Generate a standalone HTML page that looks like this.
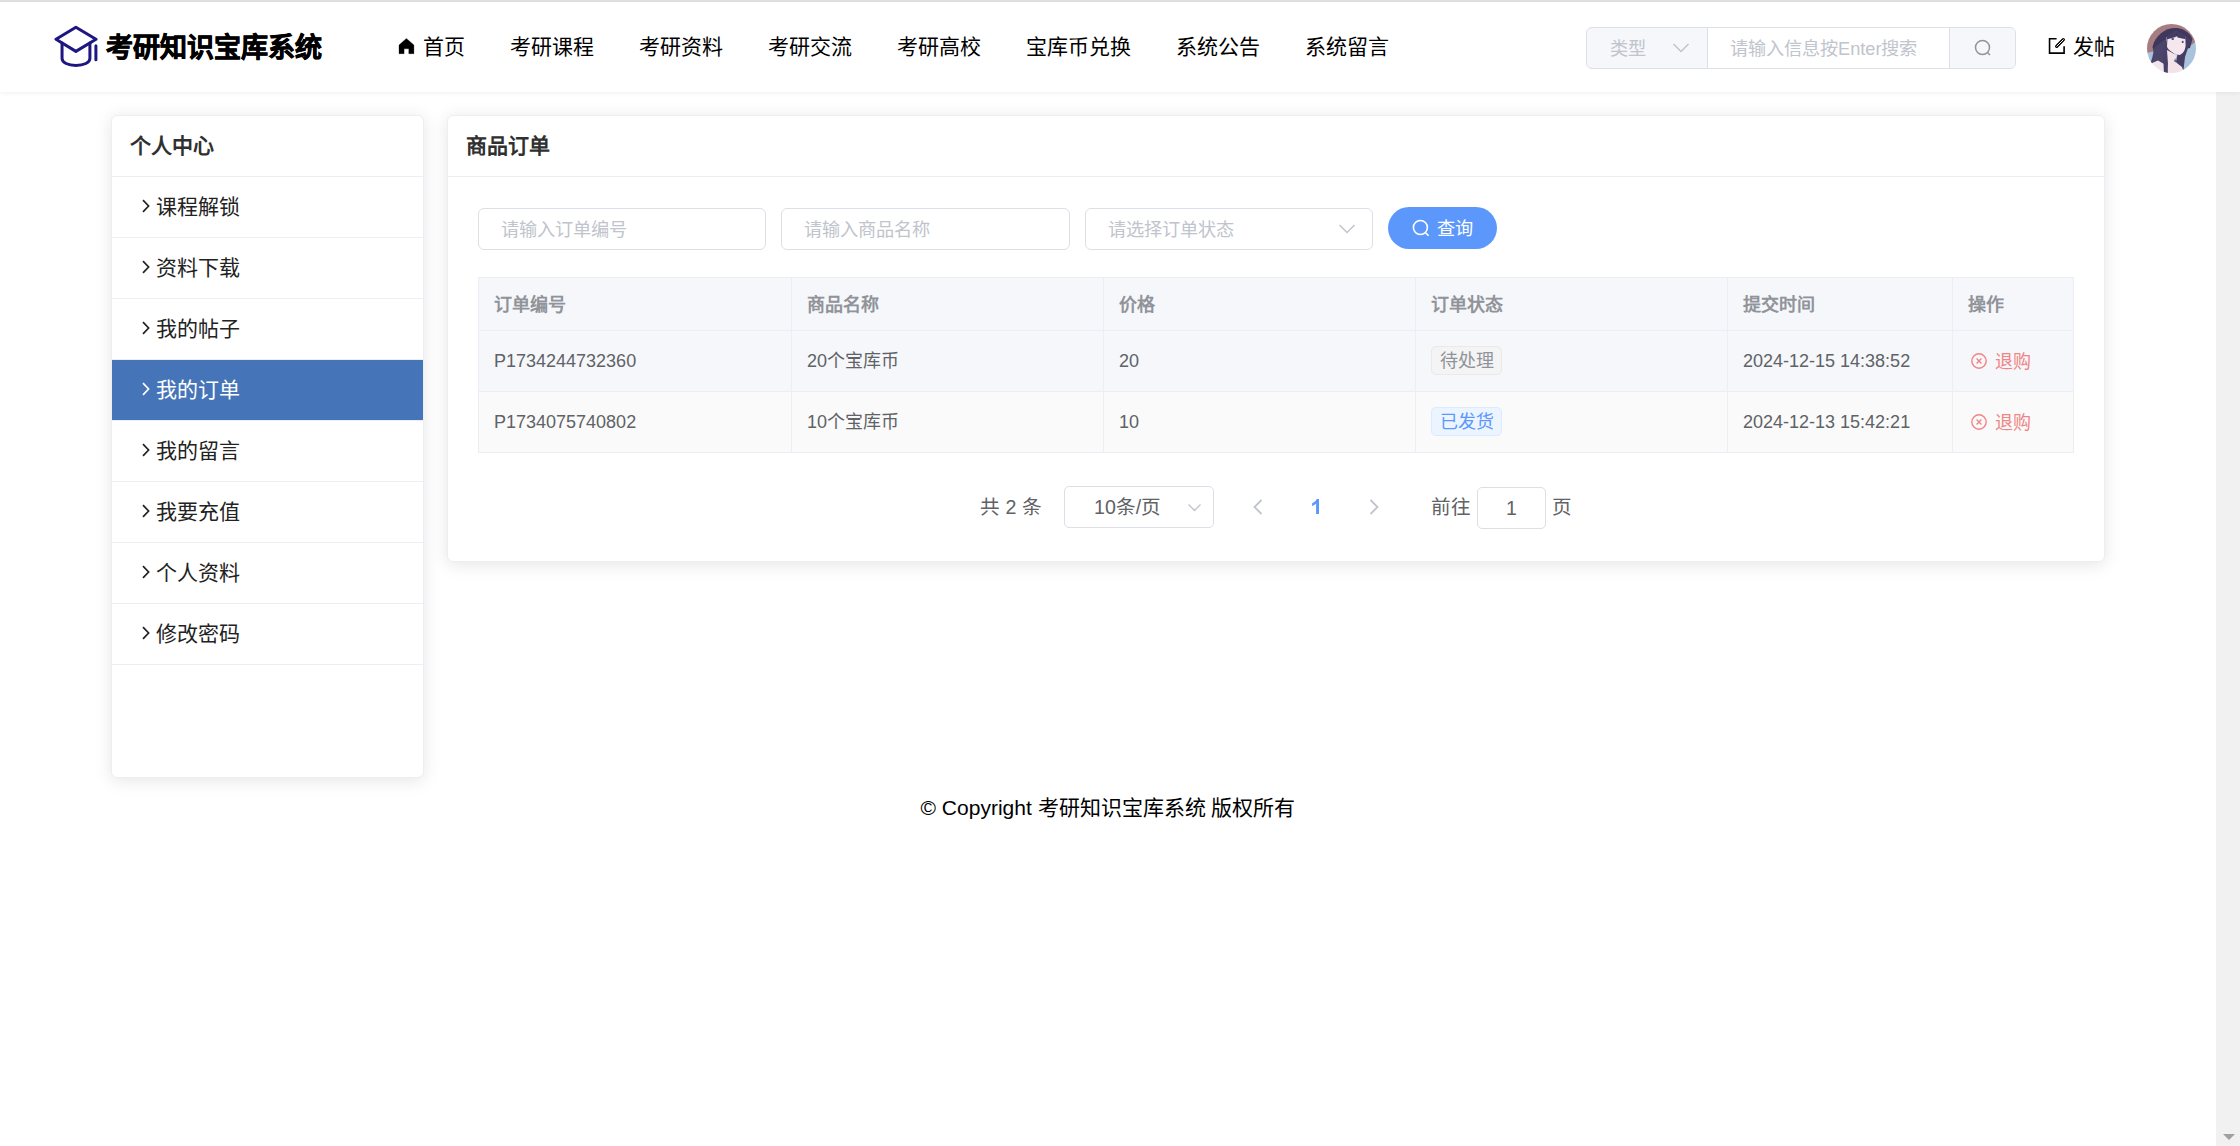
<!DOCTYPE html>
<html lang="zh-CN">
<head>
<meta charset="utf-8">
<title>考研知识宝库系统</title>
<style>
*{box-sizing:border-box;margin:0;padding:0}
html,body{width:2240px;height:1146px;overflow:hidden;background:#fff;font-family:"Liberation Sans",sans-serif;color:#000}
body{position:relative}
.abs{position:absolute}
/* top strip */
#strip{left:0;top:0;width:2240px;height:2px;background:#e1e3e0}
/* header */
#header{left:0;top:2px;width:2240px;height:90px;background:#fff;box-shadow:0 1.4px 5.6px rgba(0,21,41,.08);z-index:5}
#logo{left:54px;top:20px;width:46px;height:46px}
#title{left:106px;top:15px;height:62px;line-height:62px;font-size:27px;font-weight:bold;color:#000;white-space:nowrap;-webkit-text-stroke:0.7px #000}
.nav{top:0;height:90px;line-height:90px;font-size:21px;color:#000;white-space:nowrap}
/* scrollbar */
#sbar{left:2216px;top:92px;width:24px;height:1054px;background:#f1f1f1}
#sbar i{position:absolute;left:6.5px;top:1042px;width:0;height:0;border-left:6px solid transparent;border-right:6px solid transparent;border-top:6.5px solid #a0a0a0}
/* search */
#search{left:1586px;top:25px;width:430px;height:42px;border:1px solid #dcdfe6;border-radius:6px;background:#f5f7fa}
#search .mid{left:120px;top:-1px;width:243px;height:42px;background:#fff;border:1px solid #dcdfe6}
.ph{color:#c0c4cc;white-space:nowrap}
/* cards */
.card{background:#fff;border:1px solid #ebeef5;border-radius:6px;box-shadow:0 2.8px 16.8px rgba(0,0,0,.1)}
#side{left:111px;top:115px;width:313px;height:663px;overflow:hidden}
#side h3{height:61px;line-height:60px;padding-left:18px;font-size:21px;font-weight:bold;color:#303030;border-bottom:1px solid #ebeef5}
#side .it{height:61px;line-height:60px;padding-left:28px;font-size:21px;color:#222;border-bottom:1px solid #ebeef5;white-space:nowrap;position:relative}
#side .it.on{background:#4575b8;color:#fff}
#side .it svg{position:absolute;left:30px;top:22px}
#side .it span{margin-left:16px}
#main{left:447px;top:115px;width:1658px;height:447px}
#main h3{height:61px;line-height:60px;padding-left:18px;font-size:21px;font-weight:bold;color:#303030;border-bottom:1px solid #ebeef5}
.inp{height:42px;border:1px solid #dcdfe6;border-radius:6px;background:#fff;font-size:18.2px;line-height:42px;padding-left:22px}
#btn{left:1388px;top:207px;width:109px;height:42px;border-radius:21px;background:#5c98fc;color:#fff;font-size:18.2px;line-height:42px;white-space:nowrap}
/* table */
#tbl{left:478px;top:277px;width:1596px;height:176px;border:1px solid #ebeef5;font-size:18px;color:#606266}
#tbl .row{position:absolute;left:0;width:1594px;border-bottom:1px solid #ebeef5}
#tbl .c{position:absolute;top:0;height:100%;border-right:1px solid #ebeef5;padding-left:15px;white-space:nowrap}
.tag{display:inline-block;position:relative;top:-1.5px;left:-0.3px;height:29px;line-height:29px;padding:0 7.8px;border-radius:5px;border:1px solid;font-size:18px;vertical-align:middle}
.act svg{vertical-align:middle;margin-left:2.3px;margin-top:-2px}.act span{color:#f18585;margin-left:7.2px;position:relative;top:1px}
/* pagination */
.pg{font-size:19.6px;color:#606266;white-space:nowrap;line-height:42px;height:42px}
#foot{left:0;top:790.5px;width:2216px;text-align:center;font-size:21px;line-height:34px;color:#000;white-space:nowrap}
</style>
</head>
<body>
<div id="strip" class="abs"></div>
<div id="sbar" class="abs"><i></i></div>

<div id="header" class="abs">
  <svg id="logo" class="abs" viewBox="0 0 46 46" fill="none" stroke="#1f1781" stroke-width="3" stroke-linejoin="round" stroke-linecap="round">
    <path d="M21.9 5.2 L2 17.3 L21.9 29.4 L42 17.3 Z"/>
    <path d="M8.05 21 V36.6 C8.05 40.6 14 43.4 21.9 43.4 C29.9 43.4 35.9 40.6 35.9 36.6 V21"/>
    <path d="M41.9 23.8 V37.7"/>
  </svg>
  <div id="title" class="abs">考研知识宝库系统</div>

  <svg class="abs" style="left:398px;top:35px" width="17" height="18" viewBox="0 0 17 18"><path d="M8.4 1.4 L15.9 8 V16.7 H10.8 V11.8 H6.1 V16.7 H1 V8 Z" fill="#000" stroke="#000" stroke-width="0.3" stroke-linejoin="round"/></svg>
  <div class="nav abs" style="left:423px">首页</div>
  <div class="nav abs" style="left:510px">考研课程</div>
  <div class="nav abs" style="left:639px">考研资料</div>
  <div class="nav abs" style="left:768px">考研交流</div>
  <div class="nav abs" style="left:897px">考研高校</div>
  <div class="nav abs" style="left:1026px">宝库币兑换</div>
  <div class="nav abs" style="left:1176px">系统公告</div>
  <div class="nav abs" style="left:1305px">系统留言</div>

  <div id="search" class="abs">
    <div class="abs ph" style="left:23px;top:0;line-height:42px;font-size:18.2px">类型</div>
    <svg class="abs" style="left:85px;top:14px" width="18" height="12" viewBox="0 0 18 12" fill="none" stroke="#c0c4cc" stroke-width="1.5"><path d="M1.5 2 L9 9.5 L16.5 2"/></svg>
    <div class="mid abs"><div class="abs ph" style="left:22px;top:0;line-height:42px;font-size:18.2px">请输入信息按Enter搜索</div></div>
    <svg class="abs" style="left:386px;top:10px" width="20" height="20" viewBox="0 0 20 20" fill="none" stroke="#909399" stroke-width="1.5"><circle cx="9.5" cy="9.5" r="7"/><path d="M14.5 14.5 L17 17"/></svg>
  </div>

  <svg class="abs" style="left:2048px;top:35px" width="19" height="18" viewBox="0 0 19 18" fill="none" stroke="#000" stroke-linecap="round"><path d="M8.6 1.8 H1.55 V16.1 H16.1 V9.2" stroke-width="1.6" stroke-linecap="butt" stroke-linejoin="miter"/><path d="M8.7 9.3 L15.3 2.7" stroke-width="3.3"/><path d="M8.7 9.3 L15.3 2.7" stroke-width="1" stroke="#fff"/></svg>
  <div class="nav abs" style="left:2073px">发帖</div>
  <svg class="abs" style="left:2146.5px;top:22px" width="49" height="49" viewBox="0 0 49 49">
    <defs><clipPath id="av"><circle cx="24.5" cy="24.5" r="24.5"/></clipPath><filter id="bl" x="-10%" y="-10%" width="120%" height="120%"><feGaussianBlur stdDeviation="0.45"/></filter></defs>
    <g clip-path="url(#av)"><g filter="url(#bl)">
      <rect width="49" height="49" fill="#a9c3dc"/>
      <path d="M-1 -1 H50 V17 L40 24 L14 26 L-1 29 Z" fill="#a67e82"/>
      <path d="M5.5 23 C8 11 19 3.5 29 4 C37 4.5 43 9 45.5 15 L43 24 L8 32 Z" fill="#3f395c"/>
      <path d="M7 24 C6 31 5 36 3 40 L9 38 L22 50 L33 50 L30 42 L27 30 L22 12 Z" fill="#4c446b"/>
      <path d="M37 11 L44 16 L41 24 L38 33 L36.5 46 L29 38 L31 28 Z" fill="#463e64"/>
      <path d="M19.5 13 L38.3 12 L38.6 22 C38 27 35 30.5 32.3 31 C27 30 21 26.5 19.8 22 Z" fill="#f5e7ed"/>
      <path d="M20 12 L29 6 L38.6 12 L38.6 15.2 L30.5 13.4 L29.8 8 L28.6 13 L19.6 15.6 Z" fill="#453e63"/>
      <path d="M20 26 L30 31.5 L27 37 L35 43 L37 50 L20 50 L21 40 Z" fill="#f3e3e9"/>
      <path d="M4 39.5 L11 36.5 L17 40 L22 50 L12 50 Z" fill="#f2e6ec"/>
      <path d="M20.5 14.5 L19.5 30 L21 50 L17 50 L16 30 Z" fill="#4a4268"/>
      <ellipse cx="25.7" cy="15" rx="1.4" ry="1.1" fill="#4a4f9a"/><ellipse cx="35.7" cy="17.9" rx="1" ry="1.2" fill="#4a4f9a"/>
    </g></g>
  </svg>
</div>

<div id="side" class="abs card">
  <h3>个人中心</h3>
  <div class="it"><svg width="8" height="14" viewBox="0 0 8 14" fill="none" stroke="currentColor" stroke-width="1.7"><path d="M1 1.2 L6.6 7 L1 12.8"/></svg><span>课程解锁</span></div>
  <div class="it"><svg width="8" height="14" viewBox="0 0 8 14" fill="none" stroke="currentColor" stroke-width="1.7"><path d="M1 1.2 L6.6 7 L1 12.8"/></svg><span>资料下载</span></div>
  <div class="it"><svg width="8" height="14" viewBox="0 0 8 14" fill="none" stroke="currentColor" stroke-width="1.7"><path d="M1 1.2 L6.6 7 L1 12.8"/></svg><span>我的帖子</span></div>
  <div class="it on"><svg width="8" height="14" viewBox="0 0 8 14" fill="none" stroke="currentColor" stroke-width="1.7"><path d="M1 1.2 L6.6 7 L1 12.8"/></svg><span>我的订单</span></div>
  <div class="it"><svg width="8" height="14" viewBox="0 0 8 14" fill="none" stroke="currentColor" stroke-width="1.7"><path d="M1 1.2 L6.6 7 L1 12.8"/></svg><span>我的留言</span></div>
  <div class="it"><svg width="8" height="14" viewBox="0 0 8 14" fill="none" stroke="currentColor" stroke-width="1.7"><path d="M1 1.2 L6.6 7 L1 12.8"/></svg><span>我要充值</span></div>
  <div class="it"><svg width="8" height="14" viewBox="0 0 8 14" fill="none" stroke="currentColor" stroke-width="1.7"><path d="M1 1.2 L6.6 7 L1 12.8"/></svg><span>个人资料</span></div>
  <div class="it"><svg width="8" height="14" viewBox="0 0 8 14" fill="none" stroke="currentColor" stroke-width="1.7"><path d="M1 1.2 L6.6 7 L1 12.8"/></svg><span>修改密码</span></div>
</div>

<div id="main" class="abs card">
  <h3>商品订单</h3>
</div>

<div class="inp abs ph" style="left:478px;top:208px;width:288px">请输入订单编号</div>
<div class="inp abs ph" style="left:781px;top:208px;width:289px">请输入商品名称</div>
<div class="inp abs ph" style="left:1085px;top:208px;width:288px">请选择订单状态
  <svg class="abs" style="left:252px;top:14.3px" width="18" height="12" viewBox="0 0 18 12" fill="none" stroke="#c0c4cc" stroke-width="1.5"><path d="M1.5 2 L9 9.5 L16.5 2"/></svg>
</div>
<div id="btn" class="abs">
  <svg class="abs" style="left:23px;top:12px" width="20" height="20" viewBox="0 0 20 20" fill="none" stroke="#fff" stroke-width="1.6"><circle cx="9.4" cy="8.5" r="7"/><path d="M14.4 13.6 L17.6 16.8"/></svg>
  <span class="abs" style="left:49px;top:1px">查询</span>
</div>

<div id="tbl" class="abs">
  <div class="row" style="top:0;height:53px;background:#f5f7fa;color:#909399;font-weight:bold;line-height:54px">
    <div class="c" style="left:0;width:313px">订单编号</div>
    <div class="c" style="left:313px;width:312px">商品名称</div>
    <div class="c" style="left:625px;width:312px">价格</div>
    <div class="c" style="left:937px;width:312px">订单状态</div>
    <div class="c" style="left:1249px;width:225px">提交时间</div>
    <div class="c" style="left:1474px;width:120px;border-right:0">操作</div>
  </div>
  <div class="row" style="top:53px;height:61px;background:#f5f7fa;line-height:60px">
    <div class="c" style="left:0;width:313px">P1734244732360</div>
    <div class="c" style="left:313px;width:312px">20个宝库币</div>
    <div class="c" style="left:625px;width:312px">20</div>
    <div class="c" style="left:937px;width:312px"><span class="tag" style="background:#f4f4f5;border-color:#e9e9eb;color:#909399">待处理</span></div>
    <div class="c" style="left:1249px;width:225px">2024-12-15 14:38:52</div>
    <div class="c act" style="left:1474px;width:120px;border-right:0"><svg width="18" height="18" viewBox="0 0 18 18" fill="none" stroke="#f18585" stroke-width="1.4"><circle cx="9" cy="9" r="7.2"/><path d="M6.6 6.6 L11.4 11.4 M11.4 6.6 L6.6 11.4"/></svg><span>退购</span></div>
  </div>
  <div class="row" style="top:114px;height:60px;background:#fafafa;line-height:60px;border-bottom:0">
    <div class="c" style="left:0;width:313px">P1734075740802</div>
    <div class="c" style="left:313px;width:312px">10个宝库币</div>
    <div class="c" style="left:625px;width:312px">10</div>
    <div class="c" style="left:937px;width:312px"><span class="tag" style="background:#ecf5ff;border-color:#d9ecff;color:#5c98fc">已发货</span></div>
    <div class="c" style="left:1249px;width:225px">2024-12-13 15:42:21</div>
    <div class="c act" style="left:1474px;width:120px;border-right:0"><svg width="18" height="18" viewBox="0 0 18 18" fill="none" stroke="#f18585" stroke-width="1.4"><circle cx="9" cy="9" r="7.2"/><path d="M6.6 6.6 L11.4 11.4 M11.4 6.6 L6.6 11.4"/></svg><span>退购</span></div>
  </div>
</div>

<div class="pg abs" style="left:980px;top:486.2px">共 2 条</div>
<div class="pg abs" style="left:1064px;top:486px;width:150px;border:1px solid #dcdfe6;border-radius:5px;line-height:40.5px;padding-left:29px">10条/页
  <svg class="abs" style="left:122px;top:16px" width="15" height="10" viewBox="0 0 15 10" fill="none" stroke="#c0c4cc" stroke-width="1.4"><path d="M1.5 1.5 L7.5 7.5 L13.5 1.5"/></svg>
</div>
<svg class="abs" style="left:1252px;top:498px" width="12" height="18" viewBox="0 0 12 18" fill="none" stroke="#c0c4cc" stroke-width="1.8"><path d="M9.5 2 L2.5 9 L9.5 16"/></svg>
<svg class="abs" style="left:1310px;top:497px" width="12" height="19" viewBox="0 0 12 19"><path d="M9 2 H6.8 C6 3.8 4.2 5.5 2.1 6.3 V8.9 C3.7 8.4 5.1 7.5 6.1 6.4 V17 H9 Z" fill="#5c98fc"/></svg>
<svg class="abs" style="left:1368px;top:498px" width="12" height="18" viewBox="0 0 12 18" fill="none" stroke="#c0c4cc" stroke-width="1.8"><path d="M2.5 2 L9.5 9 L2.5 16"/></svg>
<div class="pg abs" style="left:1431px;top:486.2px">前往</div>
<div class="pg abs" style="left:1477px;top:487px;width:69px;border:1px solid #dcdfe6;border-radius:5px;line-height:40px;text-align:center">1</div>
<div class="pg abs" style="left:1552px;top:486.2px">页</div>

<div id="foot" class="abs">© Copyright 考研知识宝库系统 版权所有</div>
</body>
</html>
